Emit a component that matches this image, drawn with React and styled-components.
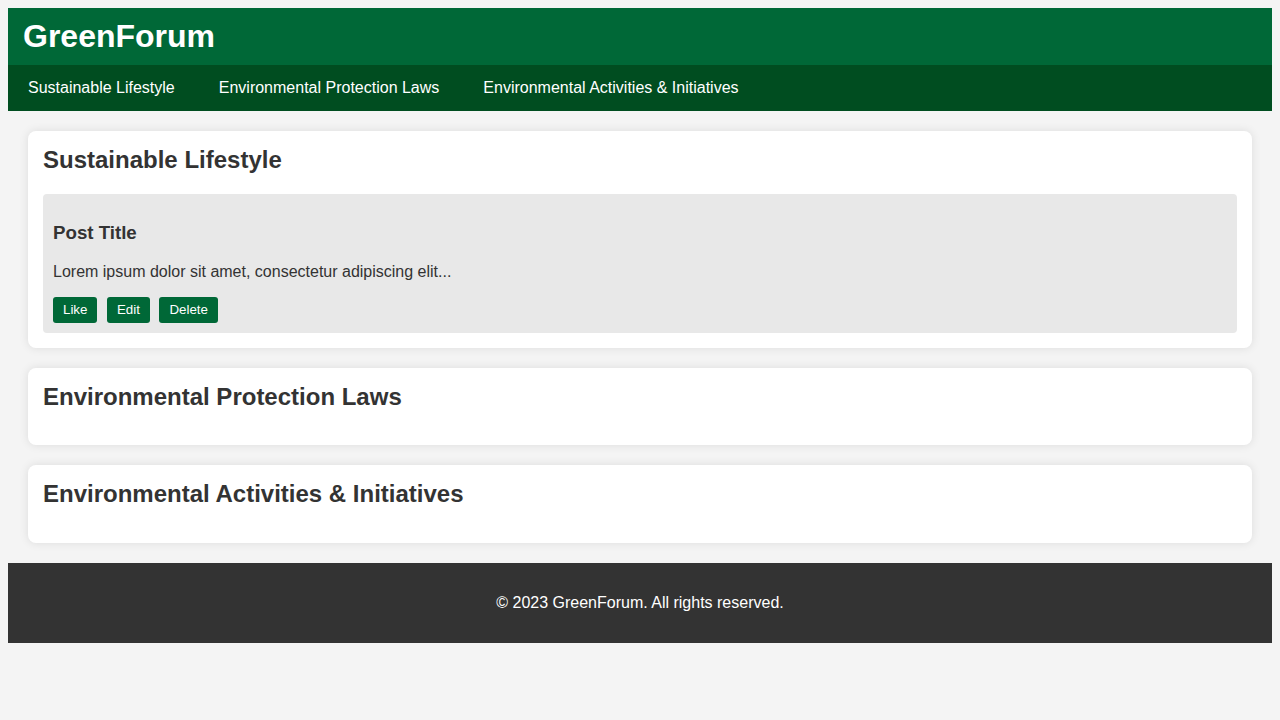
import React from 'react';
import styled, { createGlobalStyle } from 'styled-components';

const GlobalStyle = createGlobalStyle`
    body {
        margin: 8px;
        background: #f4f4f4;
        color: #333;
        font-family: "Liberation Sans", Arial, sans-serif;
    }
`;

const Header = styled.header`
    background: #006837;
    color: #fff;
    padding: 10px 15px;

    h1 {
        margin: 0;
        font-size: 32px;
        line-height: 37px;
    }
`;

const Nav = styled.nav`
    background: #004d20;
    display: flex;
    gap: 4px;

    a {
        color: #fff;
        text-decoration: none;
        font-size: 16px;
        line-height: 18px;
        padding: 14px 20px;
    }
`;

const Main = styled.main`
    padding: 20px;
    display: flex;
    flex-direction: column;
    gap: 20px;
`;

const Section = styled.section`
    background: #fff;
    border-radius: 8px;
    box-shadow: 0 0 10px rgba(0, 0, 0, 0.1);
    padding: 15px;

    h2 {
        margin: 0 0 20px;
        font-size: 24px;
        line-height: 27.5px;
    }
`;

const Post = styled.article`
    background: #e8e8e8;
    border-radius: 4px;
    padding: 10px;

    h3 {
        margin: 18.7px 0;
        font-size: 18.7px;
        line-height: 22px;
    }

    p {
        margin: 0 0 16px;
        font-size: 16px;
        line-height: 18.4px;
    }
`;

const Actions = styled.div`
    display: flex;
    gap: 9.5px;
`;

const ActionButton = styled.button`
    background: #006837;
    color: #fff;
    border: none;
    border-radius: 3px;
    padding: 5px 10px;
    font-family: "Liberation Sans", Arial, sans-serif;
    font-size: 13.33px;
    line-height: 15.5px;
    cursor: pointer;
`;

const Footer = styled.footer`
    background: #333;
    color: #fff;
    text-align: center;
    padding: 15px;

    p {
        margin: 16px 0;
        font-size: 16px;
        line-height: 18px;
    }
`;

const categories = [
    'Sustainable Lifestyle',
    'Environmental Protection Laws',
    'Environmental Activities & Initiatives'
];

const App = () => {
    return (
        <>
            <GlobalStyle/>
            <Header>
                <h1>GreenForum</h1>
            </Header>
            <Nav>
                {categories.map((c) => <a key={c} href='#'>{c}</a>)}
            </Nav>
            <Main>
                <Section>
                    <h2>Sustainable Lifestyle</h2>
                    <Post>
                        <h3>Post Title</h3>
                        <p>Lorem ipsum dolor sit amet, consectetur adipiscing elit...</p>
                        <Actions>
                            <ActionButton>Like</ActionButton>
                            <ActionButton>Edit</ActionButton>
                            <ActionButton>Delete</ActionButton>
                        </Actions>
                    </Post>
                </Section>
                <Section>
                    <h2>Environmental Protection Laws</h2>
                </Section>
                <Section>
                    <h2>Environmental Activities &amp; Initiatives</h2>
                </Section>
            </Main>
            <Footer>
                <p>© 2023 GreenForum. All rights reserved.</p>
            </Footer>
        </>
    );
};

export default App;
